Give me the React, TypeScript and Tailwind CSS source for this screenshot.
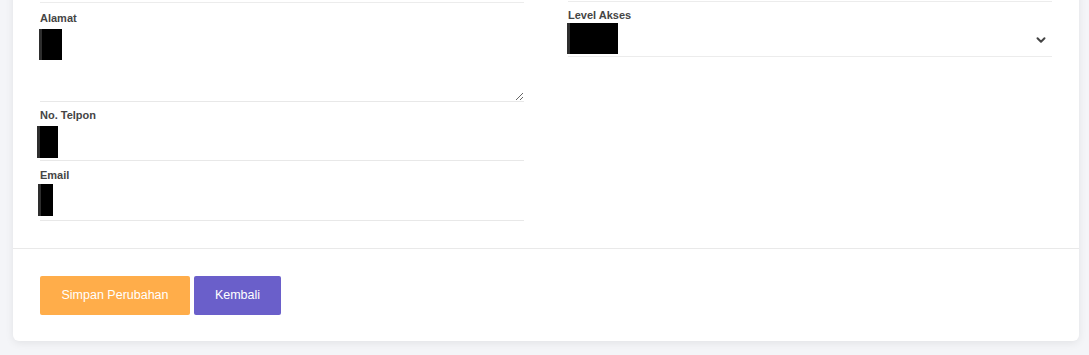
import React from 'react';
import { ChevronDown } from 'lucide-react';

const Redacted: React.FC<{ className: string }> = ({ className }) => (
    <div className={`absolute bg-black ${className}`}>
        <div className="h-full w-[3px] bg-[#2e2e2e]" />
    </div>
);

const Label: React.FC<{ children: React.ReactNode }> = ({ children }) => (
    <label className="block text-[11px] font-bold leading-[13px] text-[#454545]">{children}</label>
);

const App: React.FC = () => {
    return (
        <div className="h-[355px] overflow-hidden bg-[#f4f5f8] font-['Liberation_Sans',Arial,sans-serif]">
            <div className="ml-[13px] mr-[10px] -mt-[20px] rounded-md bg-white shadow-[0_2px_8px_rgba(0,0,0,0.08)]">
                <div className="grid grid-cols-2 gap-x-[44px] px-[27px] pt-[22px] pb-[27px]">
                    {/* kolom kiri */}
                    <div className="border-t border-[#ececec] pt-[1px]">
                        <div className="relative pt-[8px]">
                            <Label>Alamat</Label>
                            <textarea
                                className="block h-[77px] w-full resize-y border-0 border-b border-[#e8e8e8] bg-transparent outline-none"
                                defaultValue=""
                            />
                            <Redacted className="left-[-1px] top-[25px] h-[31px] w-[23px]" />
                        </div>
                        <div className="relative border-b border-[#e8e8e8] pt-[7px]">
                            <Label>No. Telpon</Label>
                            <div className="h-[38px]" />
                            <Redacted className="left-[-3px] top-[24px] h-[32px] w-[21px]" />
                        </div>
                        <div className="relative border-b border-[#e8e8e8] pt-[8px]">
                            <Label>Email</Label>
                            <div className="h-[38px]" />
                            <Redacted className="left-[-2px] top-[23px] h-[32px] w-[15px]" />
                        </div>
                    </div>

                    {/* kolom kanan */}
                    <div className="-mt-[1px]">
                        <div className="relative border-t border-b border-[#ececec] pt-[7px]">
                            <Label>Level Akses</Label>
                            <div className="flex h-[34px] items-center justify-end pr-[4px]">
                                <ChevronDown size={14} strokeWidth={3.4} className="mt-[1px] text-[#444]" />
                            </div>
                            <Redacted className="left-[-1px] top-[21px] h-[31px] w-[51px]" />
                        </div>
                    </div>
                </div>

                <div className="flex gap-[4px] border-t border-[#e9e9e9] px-[27px] pt-[27px] pb-[26px]">
                    <button className="h-[39px] w-[150px] rounded-[2px] bg-[#ffad4a] text-[12.5px] text-white">
                        Simpan Perubahan
                    </button>
                    <button className="h-[39px] w-[87px] rounded-[2px] bg-[#6a5fca] text-[12.5px] text-white">
                        Kembali
                    </button>
                </div>
            </div>
        </div>
    );
};

export default App;
